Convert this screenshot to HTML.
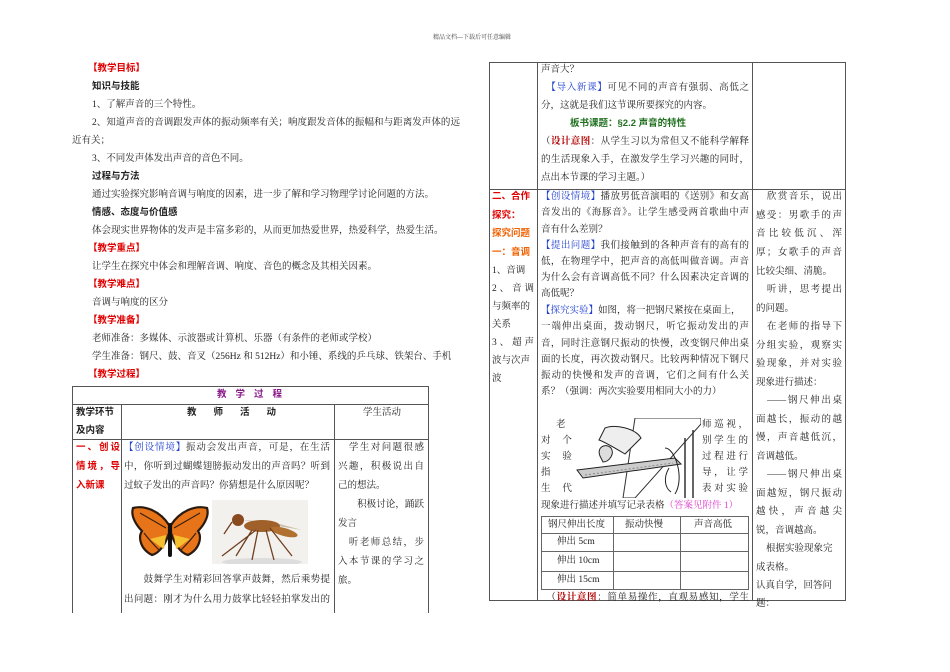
<!DOCTYPE html>
<html><head><meta charset="utf-8"><style>
body{margin:0;width:950px;height:672px;background:#fff;position:relative;overflow:hidden;font-family:"Liberation Serif","Noto Serif CJK SC","Noto Sans CJK SC",serif;color:#222;}
.l{position:absolute;white-space:nowrap;font-size:9.5px;line-height:12px;}
.j{text-align:justify;text-align-last:justify;white-space:normal;}
.b{font-weight:bold;font-family:"Liberation Sans","Noto Sans CJK SC",sans-serif;}
.r{color:#e00000;font-weight:bold;font-family:"Liberation Sans","Noto Sans CJK SC",sans-serif;}
.bl{color:#2040d0}
.or{color:#f06000;font-weight:bold;font-family:"Liberation Sans","Noto Sans CJK SC",sans-serif;}
.g{color:#207020;font-weight:bold;font-family:"Liberation Sans","Noto Sans CJK SC",sans-serif;}
.dr{color:#b00000;font-weight:bold}
.pk{color:#e040d0}
.pu{color:#8a1a8a;font-weight:bold;font-family:"Liberation Sans","Noto Sans CJK SC",sans-serif;}
.h{position:absolute;background:#555;height:1px}
.v{position:absolute;background:#555;width:1px}
</style></head><body>
<div class="l" style="left:433px;top:32px;font-size:6px;color:#444">精品文档---下载后可任意编辑</div>

<div class="l r" style="left:88px;top:63px">【教学目标】</div>
<div class="l b" style="left:92px;top:81px">知识与技能</div>
<div class="l" style="left:92px;top:99px">1、了解声音的三个特性。</div>
<div class="l j" style="left:92px;top:117px;width:368px">2、知道声音的音调跟发声体的振动频率有关；响度跟发音体的振幅和与距离发声体的远</div>
<div class="l" style="left:72px;top:135px">近有关；</div>
<div class="l" style="left:92px;top:153px">3、不同发声体发出声音的音色不同。</div>
<div class="l b" style="left:92px;top:171px">过程与方法</div>
<div class="l" style="left:92px;top:189px">通过实验探究影响音调与响度的因素，进一步了解和学习物理学讨论问题的方法。</div>
<div class="l b" style="left:92px;top:207px">情感、态度与价值感</div>
<div class="l" style="left:92px;top:225px">体会现实世界物体的发声是丰富多彩的，从而更加热爱世界，热爱科学，热爱生活。</div>
<div class="l r" style="left:88px;top:243px">【教学重点】</div>
<div class="l" style="left:92px;top:261px">让学生在探究中体会和理解音调、响度、音色的概念及其相关因素。</div>
<div class="l r" style="left:88px;top:279px">【教学难点】</div>
<div class="l" style="left:92px;top:297px">音调与响度的区分</div>
<div class="l r" style="left:88px;top:315px">【教学准备】</div>
<div class="l" style="left:92px;top:333px">老师准备：多媒体、示波器或计算机、乐器（有条件的老师或学校）</div>
<div class="l" style="left:92px;top:351px">学生准备：钢尺、鼓、音叉（256Hz 和 512Hz）和小锤、系线的乒乓球、铁架台、手机</div>
<div class="l r" style="left:88px;top:369px">【教学过程】</div>

<!-- left table -->
<div class="h" style="left:72px;top:386px;width:357px"></div>
<div class="h" style="left:72px;top:404px;width:357px"></div>
<div class="h" style="left:72px;top:439px;width:357px"></div>
<div class="v" style="left:72px;top:386px;height:227px"></div>
<div class="v" style="left:121px;top:404px;height:209px"></div>
<div class="v" style="left:334px;top:404px;height:209px"></div>
<div class="v" style="left:428px;top:386px;height:227px"></div>
<div class="l pu" style="left:217px;top:389px;word-spacing:0;letter-spacing:9px">教学过程</div>
<div class="l b" style="left:76px;top:407px">教学环节</div>
<div class="l b" style="left:76px;top:425px">及内容</div>
<div class="l b" style="left:187px;top:407px;letter-spacing:17px">教师活动</div>
<div class="l" style="left:363px;top:407px">学生活动</div>
<div class="l r" style="left:76px;top:442px;letter-spacing:2px">一、创设</div>
<div class="l r" style="left:76px;top:461px;letter-spacing:2px">情境，导</div>
<div class="l r" style="left:76px;top:480px">入新课</div>
<div class="l j" style="left:124px;top:442px;width:206px"><span class="bl">【创设情境】</span>振动会发出声音，可是，在生活</div>
<div class="l j" style="left:124px;top:461px;width:206px">中，你听到过蝴蝶翅膀振动发出的声音吗？听到</div>
<div class="l" style="left:124px;top:480px">过蚊子发出的声音吗？你猜想是什么原因呢？</div>
<div class="l j" style="left:124px;top:574px;width:206px">　　鼓舞学生对精彩回答掌声鼓舞，然后乘势提</div>
<div class="l j" style="left:124px;top:594px;width:206px">出问题：刚才为什么用力鼓掌比轻轻拍掌发出的</div>
<div class="l j" style="left:338px;top:442px;width:86px">　学生对问题很感</div>
<div class="l j" style="left:338px;top:461px;width:86px">兴趣，积极说出自</div>
<div class="l" style="left:338px;top:480px">己的想法。</div>
<div class="l j" style="left:338px;top:499px;width:86px">　　积极讨论，踊跃</div>
<div class="l" style="left:338px;top:518px">发言</div>
<div class="l j" style="left:338px;top:537px;width:86px">　听老师总结，步</div>
<div class="l j" style="left:338px;top:556px;width:86px">入本节课的学习之</div>
<div class="l" style="left:338px;top:575px">旅。</div>
<!-- butterfly -->
<svg style="position:absolute;left:130px;top:503px" width="80" height="62" viewBox="0 0 80 62">
<path d="M39 22 C30 8 15 2 3 5 C0 14 8 24 12 28 C8 34 10 46 22 52 C30 50 36 40 39 30Z" fill="#e8741a" stroke="#2a1a10" stroke-width="2.2"/>
<path d="M41 22 C50 8 65 2 77 5 C80 14 72 24 68 28 C72 34 70 46 58 52 C50 50 44 40 41 30Z" fill="#e8741a" stroke="#2a1a10" stroke-width="2.2"/>
<path d="M14 30 C20 38 26 44 30 48 M66 30 C60 38 54 44 50 48 M10 10 L36 25 M70 10 L44 25" stroke="#3a2010" stroke-width="1.2" fill="none"/>
<path d="M20 36 C26 40 30 44 34 46 L36 32Z M60 36 C54 40 50 44 46 46 L44 32Z" fill="#f5c030"/>
<rect x="38" y="20" width="4" height="34" rx="2" fill="#111"/>
</svg>
<!-- fly -->
<svg style="position:absolute;left:212px;top:500px" width="96" height="64" viewBox="0 0 96 64">
<rect width="96" height="64" fill="#f3f1ee"/>
<ellipse cx="50" cy="62" rx="40" ry="4" fill="#ddd"/>
<path d="M30 20 L90 30 L60 22Z" fill="#b8a890" opacity=".7"/>
<ellipse cx="50" cy="26" rx="18" ry="6" fill="#a0602a"/>
<ellipse cx="72" cy="32" rx="14" ry="4" fill="#b07030" transform="rotate(15 72 32)"/>
<circle cx="26" cy="20" r="6" fill="#8a4a20"/>
<path d="M20 22 L12 34 M40 30 L24 56 M46 30 L40 60 M54 30 L62 60 M58 28 L80 56 M44 30 L10 56" stroke="#704020" stroke-width="1.3" fill="none"/>
</svg>

<!-- right table -->
<div class="h" style="left:489px;top:62px;width:357px"></div>
<div class="h" style="left:489px;top:189px;width:357px"></div>
<div class="h" style="left:489px;top:600px;width:357px"></div>
<div class="v" style="left:489px;top:62px;height:539px"></div>
<div class="v" style="left:537px;top:62px;height:539px"></div>
<div class="v" style="left:752px;top:62px;height:539px"></div>
<div class="v" style="left:845px;top:62px;height:539px"></div>
<div class="l" style="left:541px;top:64px">声音大？</div>
<div class="l j" style="left:541px;top:82px;width:208px">　<span class="bl">【导入新课】</span>可见不同的声音有强弱、高低之</div>
<div class="l" style="left:541px;top:100px">分，这就是我们这节课所要探究的内容。</div>
<div class="l g" style="left:570px;top:118px">板书课题：§2.2 声音的特性</div>
<div class="l j" style="left:541px;top:136px;width:208px">（<span class="dr">设计意图</span>：从学生习以为常但又不能科学解释</div>
<div class="l j" style="left:541px;top:154px;width:208px">的生活现象入手，在激发学生学习兴趣的同时，</div>
<div class="l" style="left:541px;top:172px">点出本节课的学习主题。）</div>

<div class="l r" style="left:492px;top:191px">二、合作</div>
<div class="l r" style="left:492px;top:210px">探究：</div>
<div class="l or" style="left:492px;top:228px">探究问题</div>
<div class="l or" style="left:492px;top:247px">一：音调</div>
<div class="l" style="left:492px;top:265px">1、音调</div>
<div class="l j" style="left:492px;top:283px;width:42px">2、音调</div>
<div class="l" style="left:492px;top:301px">与频率的</div>
<div class="l" style="left:492px;top:319px">关系</div>
<div class="l j" style="left:492px;top:337px;width:42px">3、超声</div>
<div class="l" style="left:492px;top:355px">波与次声</div>
<div class="l" style="left:492px;top:373px">波</div>

<div class="l j" style="left:541px;top:191px;width:208px"><span class="bl">【创设情境】</span>播放男低音演唱的《送别》和女高</div>
<div class="l j" style="left:541px;top:207px;width:208px">音发出的《海豚音》。让学生感受两首歌曲中声</div>
<div class="l" style="left:541px;top:224px">音有什么差别？</div>
<div class="l j" style="left:541px;top:240px;width:208px"><span class="bl">【提出问题】</span>我们接触到的各种声音有的高有的</div>
<div class="l j" style="left:541px;top:256px;width:208px">低，在物理学中，把声音的高低叫做音调。声音</div>
<div class="l j" style="left:541px;top:272px;width:208px">为什么会有音调高低不同？什么因素决定音调的</div>
<div class="l" style="left:541px;top:288px">高低呢？</div>
<div class="l" style="left:541px;top:305px"><span class="bl">【探究实验】</span>如图，将一把钢尺紧按在桌面上，</div>
<div class="l j" style="left:541px;top:321px;width:208px">一端伸出桌面，拨动钢尺，听它振动发出的声</div>
<div class="l j" style="left:541px;top:338px;width:208px">音，同时注意钢尺振动的快慢，改变钢尺伸出桌</div>
<div class="l j" style="left:541px;top:354px;width:208px">面的长度，再次拨动钢尺。比较两种情况下钢尺</div>
<div class="l j" style="left:541px;top:370px;width:208px">振动的快慢和发声的音调，它们之间有什么关</div>
<div class="l" style="left:541px;top:386px">系？（强调：两次实验要用相同大小的力）</div>
<div class="l" style="left:556px;top:419px">老</div>
<div class="l" style="left:541px;top:435px">对　&nbsp;个</div>
<div class="l" style="left:541px;top:451px">实　&nbsp;验</div>
<div class="l" style="left:541px;top:467px">指</div>
<div class="l" style="left:541px;top:483px">生　&nbsp;代</div>
<div class="l j" style="left:702px;top:419px;width:46px">师巡视，</div>
<div class="l j" style="left:702px;top:435px;width:46px">别学生的</div>
<div class="l j" style="left:702px;top:451px;width:46px">过程进行</div>
<div class="l j" style="left:702px;top:467px;width:46px">导，让学</div>
<div class="l j" style="left:702px;top:483px;width:46px">表对实验</div>
<div class="l" style="left:541px;top:500px">现象进行描述并填写记录表格<span class="pk">（答案见附件 1）</span></div>
<svg style="position:absolute;left:575px;top:418px" width="126" height="80" viewBox="0 0 126 80">
<path d="M60 0 L126 0 L126 6 L60 80 L48 80Z" fill="#fff" stroke="#333" stroke-width="1"/>
<path d="M110 20 L110 80 M118 12 L118 80" stroke="#333" stroke-width="1.5"/>
<path d="M2 52 L100 40 L106 46 L8 60Z" fill="#ccc" stroke="#222" stroke-width="1"/>
<path d="M30 10 C40 6 60 10 66 20 L50 36 C40 30 30 24 24 22Z" fill="#eee" stroke="#222" stroke-width="1"/>
<path d="M26 40 C20 30 30 24 36 30 C40 36 34 44 28 44Z" fill="#ddd" stroke="#222"/>
<path d="M90 30 C100 30 110 60 100 76 M94 50 C88 60 90 70 96 74" stroke="#222" fill="none"/>
<path d="M10 57 L98 45" stroke="#888" stroke-dasharray="2 2"/>
</svg>
<!-- inner table -->
<div class="h" style="left:541px;top:516px;width:208px;background:#666"></div>
<div class="h" style="left:541px;top:533px;width:208px;background:#666"></div>
<div class="h" style="left:541px;top:551px;width:208px;background:#666"></div>
<div class="h" style="left:541px;top:571px;width:208px;background:#666"></div>
<div class="h" style="left:541px;top:589px;width:208px;background:#666"></div>
<div class="v" style="left:541px;top:516px;height:74px;background:#666"></div>
<div class="v" style="left:613px;top:516px;height:74px;background:#666"></div>
<div class="v" style="left:680px;top:516px;height:74px;background:#666"></div>
<div class="v" style="left:748px;top:516px;height:74px;background:#666"></div>
<div class="l" style="left:548px;top:519px">钢尺伸出长度</div>
<div class="l" style="left:625px;top:519px">振动快慢</div>
<div class="l" style="left:694px;top:519px">声音高低</div>
<div class="l" style="left:557px;top:536px">伸出 5cm</div>
<div class="l" style="left:557px;top:555px">伸出 10cm</div>
<div class="l" style="left:557px;top:574px">伸出 15cm</div>
<div class="l j" style="left:541px;top:592px;width:208px">　（<span class="dr">设计意图</span>：简单易操作，直观易感知，学生</div>

<div class="l j" style="left:756px;top:191px;width:86px">　欣赏音乐，说出</div>
<div class="l j" style="left:756px;top:210px;width:86px">感受：男歌手的声</div>
<div class="l j" style="left:756px;top:228px;width:86px">音比较低沉、浑</div>
<div class="l j" style="left:756px;top:247px;width:86px">厚；女歌手的声音</div>
<div class="l" style="left:756px;top:266px">比较尖细、清脆。</div>
<div class="l j" style="left:756px;top:284px;width:86px">　听讲，思考提出</div>
<div class="l" style="left:756px;top:303px">的问题。</div>
<div class="l j" style="left:756px;top:321px;width:86px">　在老师的指导下</div>
<div class="l j" style="left:756px;top:340px;width:86px">分组实验，观察实</div>
<div class="l j" style="left:756px;top:358px;width:86px">验现象，并对实验</div>
<div class="l" style="left:756px;top:377px">现象进行描述：</div>
<div class="l j" style="left:756px;top:395px;width:86px">　——钢尺伸出桌</div>
<div class="l j" style="left:756px;top:414px;width:86px">面越长，振动的越</div>
<div class="l j" style="left:756px;top:432px;width:86px">慢，声音越低沉，</div>
<div class="l" style="left:756px;top:451px">音调越低。</div>
<div class="l j" style="left:756px;top:469px;width:86px">　——钢尺伸出桌</div>
<div class="l j" style="left:756px;top:488px;width:86px">面越短，钢尺振动</div>
<div class="l j" style="left:756px;top:506px;width:86px">越快，声音越尖</div>
<div class="l" style="left:756px;top:525px">锐，音调越高。</div>
<div class="l" style="left:766px;top:543px">根据实验现象完</div>
<div class="l" style="left:756px;top:562px">成表格。</div>
<div class="l" style="left:756px;top:580px">认真自学，回答问</div>
<div class="l" style="left:756px;top:598px">题：</div>
</body></html>
